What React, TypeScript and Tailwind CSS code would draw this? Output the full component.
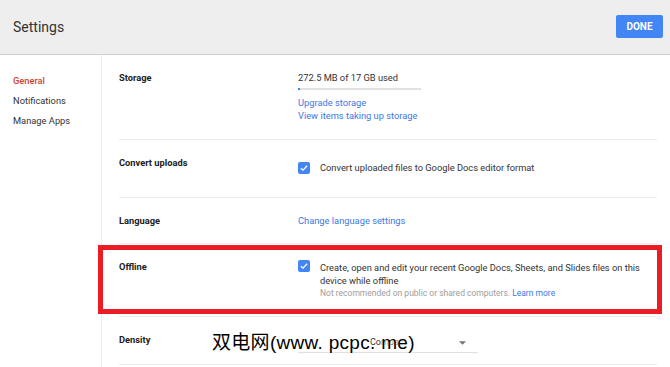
import React from 'react';

const Check: React.FC = () => (
  <span className="flex h-[12px] w-[12px] shrink-0 items-center justify-center rounded-[2px] bg-[#4285f4]">
    <svg viewBox="0 0 12 12" className="h-[10px] w-[10px]">
      <path d="M2.2 6.2 L4.8 8.6 L9.8 3.4" fill="none" stroke="white" strokeWidth="1.6" />
    </svg>
  </span>
);

const Row: React.FC<{ label: string; height: string; children: React.ReactNode }> = ({
  label,
  height,
  children,
}) => (
  <div className={`flex border-b border-[#ebebeb] pt-[16px] ${height}`}>
    <div className="w-[179px] shrink-0 text-[9.3px] font-bold leading-[14px] text-[#212121]">{label}</div>
    <div className="flex-1">{children}</div>
  </div>
);

export default function App() {
  return (
    <div className="relative h-[367px] w-[670px] overflow-hidden bg-white font-['Roboto',sans-serif]">
      {/* Header */}
      <div className="flex h-[55px] items-center justify-between border-b border-[#d0d0d0] bg-[#eeeeee] pl-[13px] pr-[7px]">
        <div className="mt-[1px] text-[14px] text-[#333333]">Settings</div>
        <button className="mb-[2px] h-[23px] w-[47px] rounded-[2px] bg-[#4285f4] text-[10px] font-bold text-white">
          DONE
        </button>
      </div>

      <div className="flex">
        {/* Sidebar */}
        <div className="h-[312px] w-[102px] shrink-0 border-r border-[#eeeeee] px-[13px] pt-[16px] text-[9.3px] leading-[20px] text-[#333333]">
          <div className="font-medium text-[#d23f31]">General</div>
          <div>Notifications</div>
          <div>Manage Apps</div>
        </div>

        {/* Content */}
        <div className="flex-1 pl-[17px] pr-[13px]">
          <Row label="Storage" height="h-[85px]">
            <div className="text-[9.3px] leading-[13px] text-[#333333]">272.5 MB of 17 GB used</div>
            <div className="mt-[4px] h-[2px] w-[123px] bg-[#e0e0e0]">
              <div className="h-[2px] w-[2px] bg-[#4285f4]" />
            </div>
            <div className="mt-[6px] text-[9.3px] leading-[13px] text-[#3b78e7]">
              <div>Upgrade storage</div>
              <div>View items taking up storage</div>
            </div>
          </Row>

          <Row label="Convert uploads" height="h-[58px]">
            <div className="mt-[5px] flex items-center gap-[10px] text-[9.3px] leading-[13px] text-[#333333]">
              <Check />
              <span>Convert uploaded files to Google Docs editor format</span>
            </div>
          </Row>

          <Row label="Language" height="h-[46px]">
            <div className="text-[9.3px] leading-[14px] text-[#3b78e7]">Change language settings</div>
          </Row>

          <Row label="Offline" height="h-[73px]">
            <div className="flex gap-[10px] text-[9.3px] leading-[13px] text-[#333333]">
              <div className="mt-[0px]">
                <Check />
              </div>
              <div className="mt-[1px] w-[320px]">
                <div>Create, open and edit your recent Google Docs, Sheets, and Slides files on this device while offline</div>
                <div className="text-[8.5px] text-[#9e9e9e]">
                  Not recommended on public or shared computers. <span className="text-[#3b78e7]">Learn more</span>
                </div>
              </div>
            </div>
          </Row>

          <Row label="Density" height="h-[48px]">
            <div className="flex h-[20px] w-[180px] items-center justify-between border-b border-[#e0e0e0] pl-[72px] pr-[12px] text-[9px] text-[#333333]">
              <span>Compact</span>
              <svg viewBox="0 0 8 4" className="h-[4px] w-[7px]">
                <path d="M0 0 L8 0 L4 4 Z" fill="#757575" />
              </svg>
            </div>
          </Row>
        </div>
      </div>

      {/* Red highlight annotation */}
      <div className="absolute left-[98px] top-[245px] h-[69px] w-[564px] border-[5px] border-[#ea1c24]" />

      {/* Watermark */}
      <div className="absolute left-[212px] top-[329px] font-['Liberation_Sans','Noto_Sans_CJK_SC',sans-serif] text-[19px] leading-[28px] tracking-[0.3px] text-black [text-shadow:0_0_2px_white,0_0_2px_white,0_0_2px_white]">
        双电网(www. pcpc. me)
      </div>
    </div>
  );
}
